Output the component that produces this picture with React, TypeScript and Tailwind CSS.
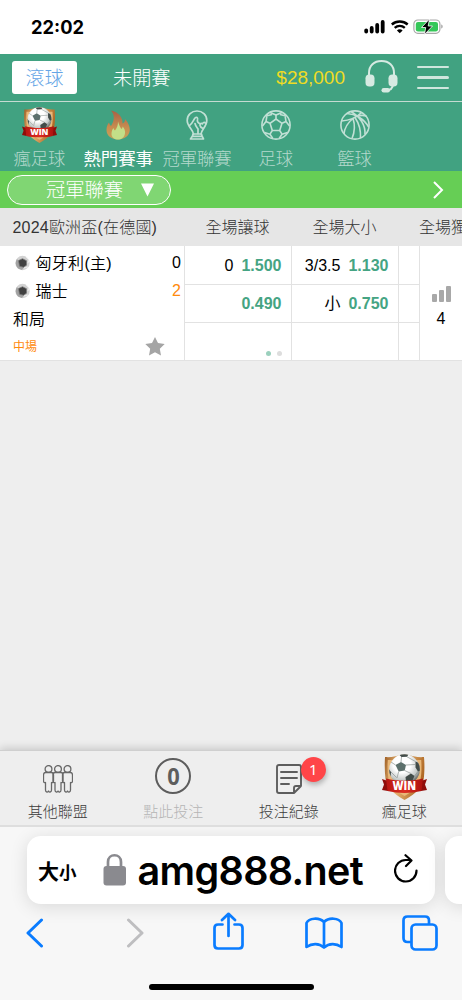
import type { ReactNode } from "react";

const uiFont = "font-['Liberation_Sans','Noto_Sans_CJK_TC',sans-serif]";

function WinBadge({ className }: { className: string }) {
  return (
    <svg viewBox="0 0 45 46" className={className} aria-hidden="true">
      <defs>
        <radialGradient id="ball" cx="42%" cy="32%" r="72%">
          <stop offset="0.4" stopColor="#fff" />
          <stop offset="0.75" stopColor="#c3c8c7" />
          <stop offset="1" stopColor="#3f4543" />
        </radialGradient>
        <linearGradient id="shield" x1="0" y1="0" x2="1" y2="0.3">
          <stop offset="0" stopColor="#9c5c22" />
          <stop offset="0.4" stopColor="#eebd7c" />
          <stop offset="1" stopColor="#b06a26" />
        </linearGradient>
        <linearGradient id="ribbon" x1="0" y1="0" x2="1" y2="0">
          <stop offset="0" stopColor="#b81611" />
          <stop offset="0.5" stopColor="#dd2c22" />
          <stop offset="1" stopColor="#ab110d" />
        </linearGradient>
        <clipPath id="ball-clip">
          <circle cx="22.500" cy="15.500" r="15.300" />
        </clipPath>
      </defs>
      <path d="M3 3C9 3.500 14 2.500 22.500 0 31 2.500 36 3.500 42 3c.7 8 .5 16-.3 22-1.500 8-7 14.500-19.200 21C10.500 39.500 5 33 3.500 25 2.700 18 2.500 11 3 3Z" fill="url(#shield)" />
      <path d="M5.800 6h33.400c.5 8 .3 13-.7 19-1.800 7-6.500 11.500-16 17-9.500-5.500-14.200-10-16-17C5.500 19 5.300 13 5.800 6Z" fill="#e9b878" />
      <circle cx="22.500" cy="15.500" r="15.300" fill="url(#ball)" />
      <g clipPath="url(#ball-clip)">
        <path d="m13.500 11 5.500-3 5 3-1.300 5.500-6 1Z" fill="#5d716d" />
        <path d="m17 .5 4.500-1 5 1-1.500 2.300-5.500.2ZM33.500 7.500l4.500 2 1 7-3 1-2.500-4ZM6.500 14.500l2.500 3.500-.5 5.500-3-3.500ZM23.500 23l5.500-3.500 3.500 2.500-2.500 5.500-6 0Z" fill="#424c49" />
        <path d="m19 8 .5-5M24 11l9-.5M22.700 16.500l6.300 3M16.700 17.500l-1.700 6.500M13.500 11l-4.500-3M9 18l5.500 5.500M36 17.500l-3.500 4.500M25 2.800l8.500 4.700" stroke="#8b9391" strokeWidth="0.7" fill="none" />
      </g>
      <path d="m0 25 6 2v10l-6-1 2-5.500ZM45 25l-6 2v10l6-1-2-5.500Z" fill="#8f0d0a" />
      <path d="M4 24.500c12 3 25 3 37 0L39.500 37c-11 2.500-23 2.500-34 0Z" fill="url(#ribbon)" />
      <text x="22.300" y="36.300" textAnchor="middle" fontSize="11.400" fontWeight="800" fill="#fff" fontFamily="Open Sans, sans-serif" textLength="23.500" lengthAdjust="spacingAndGlyphs">
        WIN
      </text>
    </svg>
  );
}

function Flame() {
  return (
    <svg viewBox="0 0 24 30" className="h-[30px] w-6" aria-hidden="true">
      <defs>
        <linearGradient id="flame" x1="0" y1="0" x2="0" y2="1">
          <stop offset="0" stopColor="#a96045" />
          <stop offset="0.6" stopColor="#c88e50" />
          <stop offset="1" stopColor="#c5a458" />
        </linearGradient>
      </defs>
      <path d="M5 .5c7.500 1.500 12 7 11.500 13 2-.7 2.600-2.500 2.500-4.500 3 3 4.800 7 4.800 11C23.500 26 18 29.500 12 29.500S.5 26 .5 20C.5 16.500 1.500 14.500 3 12.500c.5 1.500 1 2.500 2 3.500C8.500 11 9 5 5 .5Z" fill="url(#flame)" />
      <path d="M12 11.500c1 3.500 2 5.500 3.500 7.500.8-.5 1-1.500 1-2.500 2 2 3 4.500 2.500 7-.8 4-3.500 6-7 6s-6.500-2-6.500-5.500c0-3 1-5 2-6 .2 1 .5 1.800 1.500 2.500 2-3 3-5 3-9Z" fill="#c3df88" />
    </svg>
  );
}

function Trophy() {
  return (
    <svg viewBox="0 0 22 30" className="h-[30px] w-[22px]" fill="none" stroke="#c1e0d5" strokeWidth="1.700" strokeLinejoin="round" strokeLinecap="round" aria-hidden="true">
      <path d="M7.500 24C7 19.500 1.200 16.500 1.200 10.500 1.200 5 5.600 1 11 1s9.800 4 9.800 9.500c0 6-5.300 9-5.800 13.500" />
      <path d="M3.500 15.500c3-1.500 3.500-5 5.500-7.500 1.500-1.500 3-.5 2.500 1.500-.7 2.500.5 3.500 3 4.500M9 13.500c.5 2.500 2 4 3 5.500v4.500" />
      <path d="M19.800 13.500c-1.500-1.800-3-1-3.300.3-1-1-2.800-.3-2.500 1.500.2 1.500 1.500 2.500 3 3.200" />
      <path d="M7 24h8.500l.5 2 1.500 3h-13L6.500 26ZM6.500 26.300H16" />
    </svg>
  );
}

function SoccerBall() {
  return (
    <svg viewBox="0 0 30 30" className="size-[30px]" fill="none" stroke="#c1e0d5" strokeWidth="1.600" strokeLinejoin="round" aria-hidden="true">
      <circle cx="15" cy="15" r="14.100" />
      <path d="m15 9 6 4.300-2.300 7.200h-7.400L9 13.300ZM15 9V5M21 13.300l4-1.800M18.700 20.500l2.300 3.700M11.300 20.500 9 24.200M9 13.300l-4-1.800" />
      <path d="m9 2.400 6 2.700 6-2.700M5 11.500 6.200 4M25 11.500 23.800 4M5 11.500 1.500 16M25 11.500l3.500 4.500M3.500 22.500l5.500 1.700 3 4.500M26.500 22.500 21 24.200l-3 4.500M5 6l6-1.500M25 6l-6-1.500" />
    </svg>
  );
}

function Basketball() {
  return (
    <svg viewBox="0 0 30 30" className="size-[30px]" fill="none" stroke="#c1e0d5" strokeWidth="1.600" aria-hidden="true">
      <circle cx="15" cy="15" r="14.100" />
      <path d="M1.500 11C9 10.500 17 7 21.500 2.500M7 3.500C15 4 24 8.500 28.500 17M11 1.500c9 5.500 14.500 14 14 23M13.500 8C8.500 12 4.500 18 4 24M13 8.500c2 6 1.500 14-1 20M15 7.500c4 6 6 13 5.500 20.500M17 6.500c3-1.500 6-1.500 9.500-.5" />
    </svg>
  );
}

const sports = [
  { label: "瘋足球", icon: <WinBadge className="h-[36px] w-[35px]" />, active: false },
  { label: "熱門賽事", icon: <Flame />, active: true },
  { label: "冠軍聯賽", icon: <Trophy />, active: false },
  { label: "足球", icon: <SoccerBall />, active: false },
  { label: "籃球", icon: <Basketball />, active: false }
];

function StatusBar() {
  return (
    <div className="flex h-[54px] items-center bg-white pr-[19px] pl-[31px]">
      <span className="pt-px font-['Inter',sans-serif] text-[18.3px] leading-none font-bold text-black">22:02</span>
      <svg viewBox="0 0 80 16" className="ml-auto h-4 w-20" aria-hidden="true">
        <path d="M3.200 11.300v1.200M8.700 9v3.500M14.200 6v6.500M19.700 3v9.500" stroke="#000" strokeWidth="3.800" strokeLinecap="round" />
        <g transform="translate(28 0)" fill="none" stroke="#000" strokeWidth="2.400">
          <path d="M.8 5.500a12 12 0 0 1 15.900 0M3.700 8.800a7.700 7.700 0 0 1 10.100 0" />
          <path d="M8.750 14.300 5.900 11.400a4 4 0 0 1 5.700 0Z" fill="#000" stroke="none" />
        </g>
        <rect x="50.900" y="1" width="26" height="13.300" rx="4" fill="#fff" stroke="#a8a8a8" strokeWidth="1.200" />
        <rect x="52.800" y="2.900" width="22.200" height="9.500" rx="2.200" fill="#35c759" />
        <path d="M78.200 5.500c2 .5 2 3.500 0 4Z" fill="#a8a8a8" />
        <path d="m66.500 0-8 8.500h4.200L61.500 15.500l8-8.500h-4.300Z" fill="#000" stroke="#fff" strokeWidth="0.800" />
      </svg>
    </div>
  );
}

function Header() {
  return (
    <header className="flex h-12 items-center border-b border-[#c5dbd2] bg-[#41a281] pr-[13px] pl-3">
      <button className="flex h-[33px] w-[65px] items-center justify-center rounded-[3px] bg-white pt-[3px] text-[19px] font-light text-[#65a5e6]">滾球</button>
      <span className="ml-9 pt-1 text-[19.2px] font-light text-white">未開賽</span>
      <span className="ml-auto pt-px text-[19px] text-[#f0dc24]">$28,000</span>
      <svg viewBox="0 0 33 34" className="mr-[19px] mb-[3px] ml-5 h-[34px] w-[33px]" fill="none" stroke="#d6eae2" aria-hidden="true">
        <path d="M4 16v-2C4 6.500 9 2 16.500 2S29 6.500 29 14v2" strokeWidth="2" />
        <rect x="0.500" y="15.500" width="9" height="12" rx="3.800" fill="#d6eae2" stroke="none" />
        <rect x="23.500" y="15.500" width="9" height="12" rx="3.800" fill="#d6eae2" stroke="none" />
        <path d="M28 25c0 5-3 6.500-8 6.500" strokeWidth="2" />
        <rect x="16.500" y="29" width="8.500" height="4.500" rx="2.200" fill="#d6eae2" stroke="none" />
      </svg>
      <div className="flex w-8 flex-col gap-2">
        <i className="h-[2.67px] rounded-full bg-[#cfe6dd]" />
        <i className="h-[2.67px] rounded-full bg-[#cfe6dd]" />
        <i className="h-[2.67px] rounded-full bg-[#cfe6dd]" />
      </div>
    </header>
  );
}

function SportTabs() {
  return (
    <nav className="flex h-[69px] bg-[#41a281]">
      {sports.map((sport) => (
        <div key={sport.label} className="flex w-[78.8px] shrink-0 flex-col items-center">
          <div className="flex h-[45px] items-center justify-center">{sport.icon}</div>
          <span className={sport.active ? "text-[17.4px] leading-6 whitespace-nowrap text-white" : "text-[17.3px] leading-6 font-light whitespace-nowrap text-[#b5d9cd]"}>
            {sport.label}
          </span>
        </div>
      ))}
    </nav>
  );
}

function LeagueBar() {
  return (
    <div className="flex h-[37px] items-center justify-between bg-[#66ce55] pr-[18px] pl-[7px]">
      <button className="flex h-[30px] w-[164px] items-center rounded-full border-[1.5px] border-white bg-[#80d673] pt-px pl-[38px] text-[19.3px] leading-none font-light text-white">
        <span className="pt-px">冠軍聯賽</span>
        <svg viewBox="0 0 13 14" className="ml-[18px] h-3.5 w-[13px]" fill="#fff" aria-hidden="true">
          <path d="M0 .5h13L6.500 13.500Z" />
        </svg>
      </button>
      <svg viewBox="0 0 12 18" className="h-[18px] w-3" fill="none" stroke="#fff" strokeWidth="2" aria-hidden="true">
        <path d="m2 1 8 8-8 8" />
      </svg>
    </div>
  );
}

function TeamBall() {
  return (
    <svg viewBox="0 0 16 16" className="mr-[5px] size-4" aria-hidden="true">
      <circle cx="7.500" cy="8" r="7.200" fill="#d2d2d2" />
      <path d="M2 4a7.500 7.500 0 0 0 1 9.500l4 1.500 2-3-4-4Z" fill="#a2a2a2" />
      <path d="m11 2 3 3-1 3M9 13l4-1" stroke="#eee" fill="none" />
      <path d="m3.500 5.500 4-1.800 4 2v4.500l-3 2-4-1Z" fill="#404040" stroke="#777" strokeWidth="0.700" />
    </svg>
  );
}

function Odds({ line, value }: { line?: string; value: string }) {
  return (
    <div className="flex items-center justify-end gap-2 border-b border-[#e2e2e2] pt-px pr-[9.5px] text-[16px] text-black">
      {line && <span>{line}</span>}
      <b className="text-[#45a483]">{value}</b>
    </div>
  );
}

function MatchTable() {
  return (
    <section>
      <div className="flex h-[38px] items-center overflow-hidden bg-[#e6e6e6] pt-px text-[16px] font-light whitespace-nowrap text-[#333]">
        <span className="w-[184px] shrink-0 pl-[12.5px] tracking-[0.2px]">2024歐洲盃(在德國)</span>
        <span className="w-[107px] shrink-0 text-center">全場讓球</span>
        <span className="w-[107px] shrink-0 text-center">全場大小</span>
        <span className="shrink-0 pl-[21px]">全場獨</span>
      </div>
      <div className="flex h-[115px] border-b border-[#e2e2e2] bg-white text-[16px] text-black">
        <div className="w-[184px] pt-[3px] pr-[3px] pl-[13px]">
          <div className="flex h-[28px] items-center pl-[1.5px] font-[350] tracking-[0.3px]">
            <TeamBall />
            <span className="pt-px">匈牙利(主)</span>
            <span className="ml-auto font-normal tracking-normal">0</span>
          </div>
          <div className="flex h-[28px] items-center pl-[1.5px] font-[350] tracking-[0.3px]">
            <TeamBall />
            <span className="pt-px">瑞士</span>
            <span className="ml-auto font-normal tracking-normal text-[#ff8a0c]">2</span>
          </div>
          <div className="flex h-[28px] items-center pt-0.5 font-[350]">和局</div>
          <div className="flex h-[26px] items-center justify-between pr-[16px] text-[12px] text-[#ff8a0c]">
            <span className="pt-0.5">中場</span>
            <svg viewBox="0 0 20 19" className="size-[20px]" fill="#a5a5a5" aria-hidden="true">
              <path d="m10 .5 3 6 6.700 1-4.900 4.800 1.200 6.700-6-3.200L4 19l1.200-6.700L.3 7.500l6.700-1Z" />
            </svg>
          </div>
        </div>
        <div className="grid w-[107px] grid-rows-[39px_38px_37px] border-l border-[#e2e2e2]">
          <Odds line="0" value="1.500" />
          <Odds value="0.490" />
          <div className="flex items-end justify-end gap-1.5 pr-[9px] pb-1">
            <i className="size-[5px] rounded-full bg-[#9bd0bd]" />
            <i className="size-[5px] rounded-full bg-[#ddd]" />
          </div>
        </div>
        <div className="grid w-[107px] grid-rows-[39px_38px_37px] border-l border-[#e2e2e2]">
          <Odds line="3/3.5" value="1.130" />
          <Odds line="小" value="0.750" />
        </div>
        <div className="grid w-[21px] grid-rows-[39px_38px_37px] border-l border-[#e2e2e2]">
          <div className="border-b border-[#e2e2e2]" />
          <div className="border-b border-[#e2e2e2]" />
        </div>
        <div className="flex w-[43px] flex-col items-center border-l border-[#e2e2e2] pt-10">
          <div className="flex h-4 items-end gap-[2px]">
            <i className="h-[8px] w-[5px] rounded-[1px] bg-[#a8a8a8]" />
            <i className="h-[12px] w-[5px] rounded-[1px] bg-[#a8a8a8]" />
            <i className="h-4 w-[5px] rounded-[1px] bg-[#a8a8a8]" />
          </div>
          <span className="mt-[5px] leading-6">4</span>
        </div>
      </div>
    </section>
  );
}

function People() {
  return (
    <svg viewBox="0 0 30 28" className="h-7 w-[30px]" fill="none" stroke="#686868" strokeWidth="1.300" strokeLinejoin="round" aria-hidden="true">
      {[5.5, 15, 24.5].map((x) => (
        <g key={x} transform={`translate(${x} 0)`}>
          <circle cy="4" r="3.400" />
          <path d="M-3 7.500h6c1.500 0 2 1 2 2.500v6c0 1.500-1 2-2 1.500V25c0 2.500-2.500 2.500-3 1-.5 1.500-3 1.500-3-1v-7.500c-1 .5-2 0-2-1.500v-6c0-1.500.5-2.500 2-2.500Z" />
        </g>
      ))}
    </svg>
  );
}

function BottomItem({ label, muted, children }: { label: string; muted?: boolean; children: ReactNode }) {
  return (
    <div className="flex flex-1 flex-col items-center">
      <div className="flex h-12 items-center justify-center">{children}</div>
      <span className={muted ? "text-[15px] leading-6 font-light text-[#b5b5b5]" : "text-[15px] leading-6 font-light text-[#3c3c3c]"}>{label}</span>
    </div>
  );
}

function BottomNav() {
  return (
    <nav className="flex h-[77px] border-t border-b-2 border-t-[#cfcfcf] border-b-[#dedede] bg-[#eee] pt-px shadow-[0_-2px_8px_rgba(0,0,0,0.16)]">
      <BottomItem label="其他聯盟">
        <div className="pt-[5px]"><People /></div>
      </BottomItem>
      <BottomItem label="點此投注" muted>
        <div className="grid size-9 place-items-center rounded-full border-2 border-[#5d5d5d] font-['Noto_Sans',sans-serif] text-[23px] leading-none font-bold text-[#5d5d5d]">
          <span className="scale-x-[0.95]">0</span>
        </div>
      </BottomItem>
      <BottomItem label="投注紀錄">
        <div className="relative pt-[5px]">
          <svg viewBox="0 0 26 30" className="h-[30px] w-[26px]" fill="none" stroke="#5d5d5d" strokeWidth="1.900" strokeLinecap="round" strokeLinejoin="round" aria-hidden="true">
            <path d="M25 22V3q0-2-2-2H3Q1 1 1 3v24q0 2 2 2h15ZM18 29v-5q0-2 2-2h5M5 8h16M5 14h16M5 20h8" />
          </svg>
          <span className="absolute -top-0.5 left-[25px] grid size-[25px] place-items-center rounded-full bg-[#ff4548] font-['Noto_Sans',sans-serif] text-[15px] leading-none text-white shadow-[1px_3px_5px_rgba(0,0,0,0.25)]">1</span>
        </div>
      </BottomItem>
      <BottomItem label="瘋足球">
        <div className="pt-0.5"><WinBadge className="h-[46px] w-[45px]" /></div>
      </BottomItem>
    </nav>
  );
}

function BrowserBar() {
  return (
    <footer className="flex h-[173px] flex-col overflow-hidden bg-[#f7f7f7] pt-[9px]">
      <div className="flex h-[68px] gap-2.5 pl-[27px]">
        <div className="flex w-[408px] shrink-0 items-center rounded-[14px] bg-white pr-[17px] pl-[11px] text-black shadow-[0_3px_18px_rgba(0,0,0,0.12)]">
          <span className="font-['Noto_Sans_CJK_TC',sans-serif] text-[21px] leading-none font-bold">
            大<span className="text-[17.500px]">小</span>
          </span>
          <svg viewBox="0 0 24 33" className="mb-0.5 ml-[26px] h-[33px] w-6" aria-hidden="true">
            <path d="M5 14V9c0-9 13-9 13 0v5" fill="none" stroke="#8a8a8f" strokeWidth="2.700" />
            <rect x="0.500" y="13" width="22.500" height="19.500" rx="3" fill="#8a8a8f" />
          </svg>
          <span className="ml-[11px] pt-[3px] font-['Inter',sans-serif] text-[39.5px] leading-none font-semibold tracking-[-0.65px]">amg888.net</span>
          <svg viewBox="0 0 24 29" className="mb-1 ml-auto h-[29px] w-6" fill="none" stroke="#000" strokeWidth="2.200" strokeLinecap="round" strokeLinejoin="round" aria-hidden="true">
            <path d="M22.500 16.500A10.750 10.750 0 1 1 12 6h5M11.500 1.200 17.500 6.500l-5.500 5.500" />
          </svg>
        </div>
        <div className="w-10 shrink-0 rounded-[14px] bg-white shadow-[0_3px_18px_rgba(0,0,0,0.12)]" />
      </div>
      <div className="flex h-[58px] items-center pl-[26px] text-[#0a7cff]">
        <svg viewBox="0 0 18 30" className="h-[30px] w-[18px]" fill="none" stroke="currentColor" strokeWidth="3" strokeLinecap="round" strokeLinejoin="round" aria-hidden="true">
          <path d="M15.500 2 2 15l13.500 13" />
        </svg>
        <svg viewBox="0 0 18 30" className="ml-[82px] h-[30px] w-[18px]" fill="none" stroke="#bebec0" strokeWidth="3" strokeLinecap="round" strokeLinejoin="round" aria-hidden="true">
          <path d="m2.500 2 13.500 13L2.500 28" />
        </svg>
        <svg viewBox="0 0 31 38" className="mb-1 ml-[69px] h-[38px] w-[31px]" fill="none" stroke="currentColor" strokeWidth="2.700" strokeLinejoin="round" strokeLinecap="round" aria-hidden="true">
          <path d="M9.500 12.500H5q-3.500 0-3.500 3.500v17q0 3.500 3.500 3.500h21q3.500 0 3.500-3.500V16q0-3.500-3.500-3.500h-4.500M15.500 24V2M9 8l6.500-6.200L22 8" />
        </svg>
        <svg viewBox="0 0 38 32" className="ml-[61px] h-8 w-[38px]" fill="none" stroke="currentColor" strokeWidth="2.700" strokeLinejoin="round" aria-hidden="true">
          <path d="M19 5C14 0 4 1 1.500 6v24C7 26 14 26 19 30.500 24 26 31 26 36.500 30V6C34 1 24 0 19 5v25.500" />
        </svg>
        <svg viewBox="0 0 36 36" className="ml-[59px] size-9" fill="none" stroke="currentColor" strokeWidth="2.700" strokeLinejoin="round" aria-hidden="true">
          <path d="M9 27H5.500Q1.500 27 1.500 23V5.500q0-4 4-4H23q4 0 4 4V9" />
          <rect x="9.500" y="9.500" width="25" height="25" rx="4" />
        </svg>
      </div>
      <div className="mx-auto mt-[22px] h-1.5 w-[165px] rounded-full bg-black" />
    </footer>
  );
}

export default function App() {
  return (
    <main className={`flex h-[1000px] w-[462px] flex-col overflow-hidden bg-[#eee] ${uiFont}`}>
      <StatusBar />
      <Header />
      <SportTabs />
      <LeagueBar />
      <MatchTable />
      <div className="flex-1" />
      <BottomNav />
      <BrowserBar />
    </main>
  );
}
